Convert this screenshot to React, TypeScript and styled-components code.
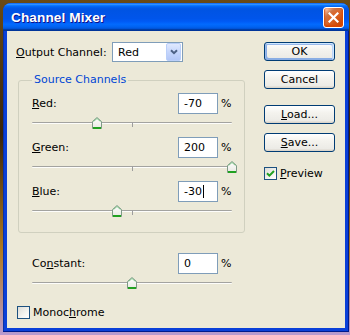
import React from "react";
import styled, { createGlobalStyle, css } from "styled-components";

const GlobalStyle = createGlobalStyle`
  html, body { margin: 0; padding: 0; }
  body {
    width: 350px;
    height: 335px;
    overflow: hidden;
    font-family: "DejaVu Sans", "Liberation Sans", sans-serif;
    font-size: 11px;
    color: #000;
  }
  * { box-sizing: border-box; }
`;

const Desktop = styled.div`
  width: 350px;
  height: 335px;
  padding: 3px 1px 3px 3px;
  background: linear-gradient(180deg, #6a4a14 0%, #3a240a 40%, #b07a20 75%, #b89ad0 100%);
`;

const Window = styled.div`
  width: 346px;
  height: 329px;
  display: flex;
  flex-direction: column;
  border-radius: 8px 8px 0 0;
  overflow: hidden;
  background: #0a3fd8;
`;

const TitleBar = styled.div`
  height: 28px;
  flex: none;
  display: flex;
  align-items: center;
  justify-content: space-between;
  padding: 1px 5px 0 8px;
  background: linear-gradient(
    180deg,
    #0058ee 0%,
    #3593ff 4%,
    #288eff 6%,
    #127dff 8%,
    #036ffc 10%,
    #0262ee 14%,
    #0057e5 20%,
    #0054e3 24%,
    #0055eb 56%,
    #005bf5 66%,
    #026afe 76%,
    #0062ef 86%,
    #0052d6 92%,
    #0040ab 94%,
    #003092 100%
  );
`;

const Title = styled.span`
  font-family: "Liberation Sans", Arial, sans-serif;
  font-weight: bold;
  font-size: 13.6px;
  color: #fff;
  text-shadow: 1px 1px 0 #0f1089;
  letter-spacing: 0.1px;
`;

const CloseButton = styled.div`
  width: 21px;
  height: 21px;
  border: 1px solid #fff;
  border-radius: 3px;
  display: flex;
  align-items: center;
  justify-content: center;
  background: radial-gradient(
    circle at 90% 90%,
    #cc4600 0%,
    #dc6527 55%,
    #cd7546 70%,
    #ffccb2 90%,
    #ffffff 100%
  );
  box-shadow: inset 0 -1px 2px 1px #da4600;
`;

const Frame = styled.div`
  flex: 1;
  display: flex;
  padding: 0 4px 4px 4px;
  background: #0a3fd8;
  box-shadow: inset -1px -1px 0 #001a8c, inset 1px 0 0 #0831a9;
`;

const Body = styled.div`
  flex: 1;
  display: flex;
  gap: 19px;
  padding: 11px 10px 0 9px;
  background: #ece9d8;
`;

const LeftColumn = styled.div`
  width: 229px;
  display: flex;
  flex-direction: column;
`;

const RightColumn = styled.div`
  width: 71px;
  display: flex;
  flex-direction: column;
`;

const OutputRow = styled.div`
  height: 20px;
  display: flex;
  align-items: center;
`;

const OutputLabel = styled.span`
  width: 96px;
  white-space: nowrap;
`;

const Select = styled.div`
  width: 71px;
  height: 20px;
  border: 1px solid #7f9db9;
  background: #fff;
  display: flex;
  align-items: center;
  justify-content: space-between;
  padding: 0 1px 0 5px;
`;

const ComboButton = styled.div`
  width: 15px;
  height: 18px;
  border: 1px solid #bacff9;
  border-radius: 2px;
  background: linear-gradient(180deg, #e0e9fe 0%, #c6d6fc 50%, #b3c7f7 100%);
  display: flex;
  align-items: center;
  justify-content: center;
`;

const GroupBox = styled.div`
  position: relative;
  margin: 18px 0 0 2px;
  width: 227px;
  border: 1px solid #d0d0bf;
  border-radius: 3px;
  padding: 12px 11px 7px 13px;
`;

const Legend = styled.span`
  position: absolute;
  top: -8px;
  left: 13px;
  line-height: 13px;
  padding: 0 2px;
  background: #ece9d8;
  color: #0046d5;
  white-space: nowrap;
`;

const ChannelBlock = styled.div<{ $indent?: number; $gap?: number }>`
  width: 201px;
  margin-top: ${(p) => p.$gap ?? 0}px;
  margin-left: ${(p) => p.$indent ?? 0}px;
`;

const RowHeader = styled.div`
  height: 21px;
  display: grid;
  grid-template-columns: 146px 40px 15px;
  align-items: center;
  line-height: 13px;
`;

const ValueBox = styled.div`
  height: 21px;
  border: 1px solid #7f9db9;
  background: #fff;
  display: flex;
  align-items: center;
  padding-left: 5px;
`;

const Caret = styled.span`
  display: inline-block;
  width: 1px;
  height: 13px;
  margin-left: 1px;
  background: #000;
`;

const Percent = styled.span`
  padding-left: 3px;
`;

const SliderArea = styled.div`
  position: relative;
  height: 23px;
  padding-top: 8px;
`;

const Track = styled.div`
  width: 200px;
  height: 2px;
  border-top: 1px solid #a3a3a0;
  background: #fdfdfb;
  border-radius: 1px;
`;

const CenterTick = styled.div`
  position: absolute;
  left: 100px;
  top: 8px;
  width: 1px;
  height: 5px;
  background: #9d9d9d;
`;

const ThumbWrap = styled.div`
  position: absolute;
  top: 3px;
  width: 10px;
  height: 13px;
  display: flex;
`;

const Checkbox = styled.span<{ $checked?: boolean }>`
  width: 13px;
  height: 13px;
  flex: none;
  border: 1px solid #1c5180;
  background: linear-gradient(135deg, #dcdcd7 0%, #f4f4f0 60%, #ffffff 100%);
  display: flex;
  align-items: center;
  justify-content: center;
`;

const CheckRow = styled.div<{ $gap: number; $indent: number }>`
  display: flex;
  align-items: center;
  gap: 3px;
  margin-top: ${(p) => p.$gap}px;
  margin-left: ${(p) => p.$indent}px;
  line-height: 13px;
`;

const Button = styled.div<{ $gap?: number; $default?: boolean }>`
  height: 19px;
  margin-top: ${(p) => p.$gap ?? 0}px;
  border: 1px solid #003c74;
  border-radius: 3px;
  background: linear-gradient(180deg, #ffffff 0%, #f4f3ee 40%, #ecebe6 86%, #d6d0c5 100%);
  display: flex;
  align-items: center;
  justify-content: center;
  line-height: 13px;
  ${(p) =>
    p.$default &&
    css`
      box-shadow: inset -1px 1px #cee7ff, inset 1px 2px #98b8ea,
        inset -2px 2px #bcd4f6, inset 1px -1px #89ade4, inset 2px -2px #89ade4;
    `}
`;

const Key = styled.span`
  text-decoration: underline;
  text-underline-offset: 1px;
`;

const CloseIcon = () => (
  <svg width="11" height="11" viewBox="0 0 11 11">
    <path d="M1.5 1.5 L9.5 9.5 M9.5 1.5 L1.5 9.5" stroke="#fff" strokeWidth="2.2" strokeLinecap="square" />
  </svg>
);

const Chevron = () => (
  <svg width="8" height="6" viewBox="0 0 8 6">
    <path d="M1 1.2 L4 4.2 L7 1.2" fill="none" stroke="#4d6185" strokeWidth="2" />
  </svg>
);

const CheckMark = () => (
  <svg width="9" height="9" viewBox="0 0 9 9">
    <path d="M1 4.2 L3.4 6.6 L8 2" fill="none" stroke="#21a121" strokeWidth="2" />
  </svg>
);

const ThumbIcon = () => (
  <svg width="10" height="13" viewBox="0 0 10 13">
    <defs>
      <linearGradient id="tg" x1="0" y1="0" x2="0" y2="1">
        <stop offset="0" stopColor="#ffffff" />
        <stop offset="1" stopColor="#e8e8e2" />
      </linearGradient>
    </defs>
    <path d="M0.5 4.5 L5 0.5 L9.5 4.5 L9.5 11.5 L0.5 11.5 Z" fill="url(#tg)" stroke="#7f9a87" strokeWidth="1" />
    <path d="M1 11 L9 11" stroke="#21a121" strokeWidth="2" />
    <path d="M1.5 4.5 L5 1.5 L8.5 4.5" fill="none" stroke="#5fb86b" strokeWidth="0.8" />
  </svg>
);

type Channel = { key: string; rest: string; value: number; caret?: boolean };

const Slider = ({ value }: { value: number }) => {
  const pos = ((value + 200) / 400) * 200;
  return (
    <SliderArea>
      <Track />
      <CenterTick />
      <ThumbWrap style={{ left: pos - 5 }}>
        <ThumbIcon />
      </ThumbWrap>
    </SliderArea>
  );
};

const ChannelRow = ({ label, value, caret }: { label: React.ReactNode; value: number; caret?: boolean }) => (
  <>
    <RowHeader>
      <span>{label}</span>
      <ValueBox>
        {value}
        {caret && <Caret />}
      </ValueBox>
      <Percent>%</Percent>
    </RowHeader>
    <Slider value={value} />
  </>
);

const channels: Channel[] = [
  { key: "R", rest: "ed:", value: -70 },
  { key: "G", rest: "reen:", value: 200 },
  { key: "B", rest: "lue:", value: -30, caret: true },
];

export default function App() {
  return (
    <>
      <GlobalStyle />
      <Desktop>
        <Window>
          <TitleBar>
            <Title>Channel Mixer</Title>
            <CloseButton>
              <CloseIcon />
            </CloseButton>
          </TitleBar>
          <Frame>
            <Body>
              <LeftColumn>
                <OutputRow>
                  <OutputLabel>
                    <Key>O</Key>utput Channel:
                  </OutputLabel>
                  <Select>
                    <span>Red</span>
                    <ComboButton>
                      <Chevron />
                    </ComboButton>
                  </Select>
                </OutputRow>
                <GroupBox>
                  <Legend>Source Channels</Legend>
                  <ChannelBlock>
                    {channels.map((c) => (
                      <ChannelRow
                        key={c.key}
                        label={
                          <>
                            <Key>{c.key}</Key>
                            {c.rest}
                          </>
                        }
                        value={c.value}
                        caret={c.caret}
                      />
                    ))}
                  </ChannelBlock>
                </GroupBox>
                <ChannelBlock $indent={16} $gap={20}>
                  <ChannelRow
                    label={
                      <>
                        Co<Key>n</Key>stant:
                      </>
                    }
                    value={0}
                  />
                </ChannelBlock>
                <CheckRow $gap={9} $indent={1}>
                  <Checkbox />
                  <span>
                    Monoc<Key>h</Key>rome
                  </span>
                </CheckRow>
              </LeftColumn>
              <RightColumn>
                <Button $default>OK</Button>
                <Button $gap={9}>Cancel</Button>
                <Button $gap={16}>
                  <span>
                    <Key>L</Key>oad...
                  </span>
                </Button>
                <Button $gap={9}>
                  <span>
                    <Key>S</Key>ave...
                  </span>
                </Button>
                <CheckRow $gap={15} $indent={0}>
                  <Checkbox $checked>
                    <CheckMark />
                  </Checkbox>
                  <span>
                    <Key>P</Key>review
                  </span>
                </CheckRow>
              </RightColumn>
            </Body>
          </Frame>
        </Window>
      </Desktop>
    </>
  );
}
